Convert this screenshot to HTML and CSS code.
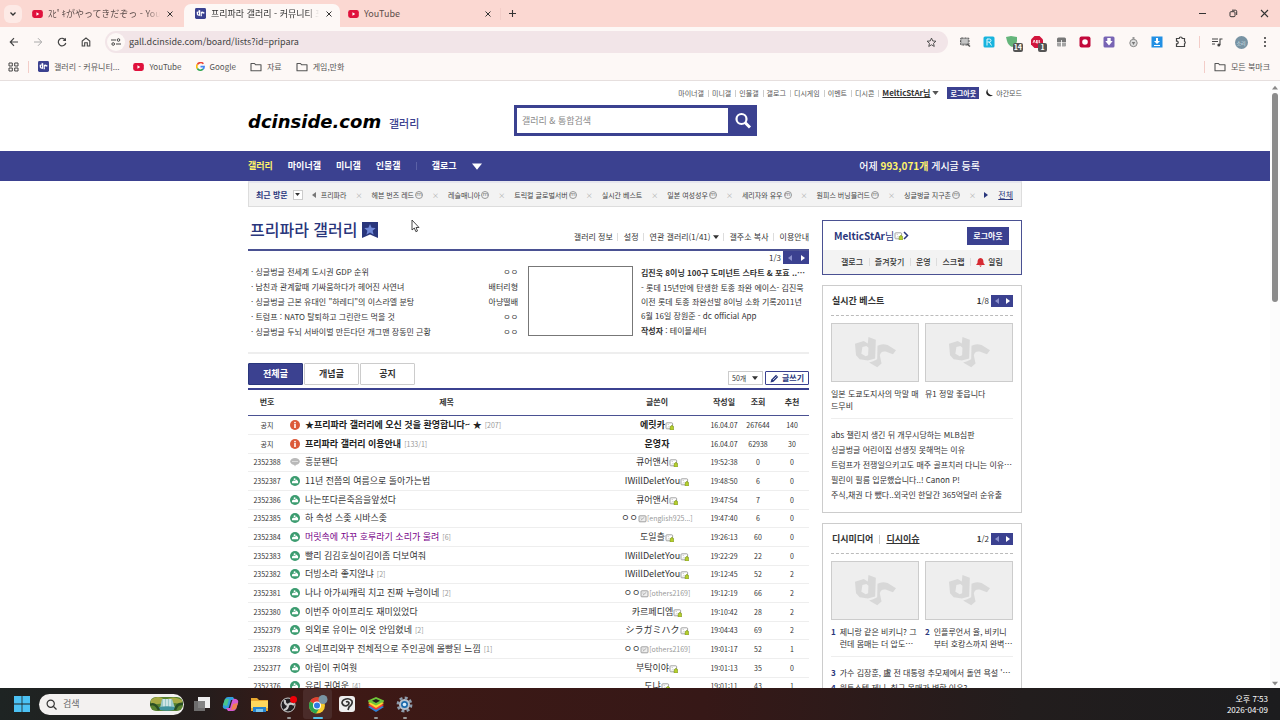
FILE: index.html
```html
<!DOCTYPE html>
<html lang="ko">
<head>
<meta charset="utf-8">
<title>프리파라 갤러리 - 커뮤니티 포털 디시인사이드</title>
<link rel="stylesheet" href="styles.css">
</head>
<body>
<svg class="defs" aria-hidden="true">
  <symbol id="yt" viewBox="0 0 12 9"><rect width="12" height="9" rx="2.4" fill="#e0113c"/><path d="M4.8 2.6v3.8L8 4.5z" fill="#fff"/></symbol>
  <symbol id="dcmark" viewBox="0 0 122 92"><path fill-rule="evenodd" d="M0 20L26 12l12 7L40 0l22 8-2 56-22 6-24-4L3 54zM22 30l-3 20 13 7 7-3 1-22-6-5z"/><path d="M67 26q14-8 30-2l25 15-9 12-22-8q-15-2-17 12l5 24-13 11-24-14 12-4 12-6z"/></symbol>
  <symbol id="fav" viewBox="0 0 12 12"><rect width="12" height="12" rx="1.6" fill="#3b4190"/><path fill-rule="evenodd" d="M1.800 4.200L4 3.800V2l1.800.7v6L3 8.200 2 7.200zM3.300 5v1.800l1 .3V5z" fill="#fff"/><path d="M6.300 4.300q1.400-.9 2.600-.2L10.600 5.200l-.8 1.100-1.700-.7q-.9 0-.8.9l.3 2-1.200 1z" fill="#fff"/></symbol>
  <symbol id="x" viewBox="0 0 8 8"><path d="M1.500 1.500l5 5M6.500 1.500l-5 5" stroke="currentColor" stroke-width="1" fill="none"/></symbol>
  <symbol id="folder" viewBox="0 0 12 10"><path d="M1 1.500h3.500L5.700 2.800H11v6H1z" fill="none" stroke="#555" stroke-width="1.100" stroke-linejoin="round"/></symbol>
  <symbol id="gal" viewBox="0 0 9 8"><rect x="1" y=".8" width="6.600" height="6" rx=".8" fill="#fff" stroke="#8a8a8a" stroke-width=".8"/><path d="M2.500 2.300l1.500.4M2.500 5.300l2-1" stroke="#bbb" stroke-width=".7"/><path d="M5.800 4.600V4q1.200-1.300 2.200 0v.6h.7V8H5.100V4.600z" fill="#b6cf2c" stroke="#6c8420" stroke-width=".5"/></symbol>
  <symbol id="half" viewBox="0 0 9 8"><rect x="1" y=".8" width="7" height="6" rx=".8" fill="#eee" stroke="#8a8a8a" stroke-width=".8"/><path d="M2.800 5.300l3.500-3M2.500 3l1 .2" stroke="#999" stroke-width=".8"/></symbol>
  <symbol id="pic" viewBox="0 0 10 10"><circle cx="5" cy="5" r="5" fill="#3c9c70"/><path d="M2 7.200V5.400l1.800-1 .9.500L6.500 3.400l1.600 1.900v1.900z" fill="#fff"/><circle cx="4.600" cy="3.200" r="1" fill="#fff"/></symbol>
  <symbol id="info" viewBox="0 0 10 10"><circle cx="5" cy="5" r="5" fill="#dc5a3a"/><path d="M4.200 4.100h1.600v4H4.200z" fill="#fff"/><circle cx="5" cy="2.600" r=".9" fill="#fff"/></symbol>
  <symbol id="talk" viewBox="0 0 10 10"><ellipse cx="5" cy="4.500" rx="4.800" ry="3.500" fill="#b9b9b9"/><path d="M4 7.500l1 2 1-2z" fill="#b9b9b9"/><path d="M2.500 4.500h1M4.500 4.500h1M6.500 4.500h1" stroke="#fff"/></symbol>
  <symbol id="left" viewBox="0 0 4 6"><path d="M4 0v6L0 3z" fill="currentColor"/></symbol>
  <symbol id="right" viewBox="0 0 4 6"><path d="M0 0v6l4-3z" fill="currentColor"/></symbol>
  <symbol id="down" viewBox="0 0 8 5"><path d="M0 0h8L4 5z" fill="currentColor"/></symbol>
</svg>

<header class="chrome">
  <div class="tabstrip">
    <button class="tab-menu" aria-label="탭 검색"><svg width="8" height="6" viewBox="0 0 8 6"><path d="M1.500 1.500L4 4l2.500-2.500" fill="none" stroke="#333" stroke-width="1.300"/></svg></button>
    <div class="tab first"><svg width="11" height="8"><use href="#yt"/></svg><span class="tab-title fade">ｽﾋﾟｷがやってきだぞっ - YouTube</span><button aria-label="탭 닫기"><svg width="8" height="8"><use href="#x"/></svg></button></div>
    <div class="tab active"><svg width="11" height="11"><use href="#fav"/></svg><span class="tab-title fade">프리파라 갤러리 - 커뮤니티 포털</span><button aria-label="탭 닫기"><svg width="8" height="8"><use href="#x"/></svg></button></div>
    <div class="tab last"><svg width="11" height="8"><use href="#yt"/></svg><span class="tab-title">YouTube</span><button aria-label="탭 닫기"><svg width="8" height="8"><use href="#x"/></svg></button></div>
    <span class="vbar"></span>
    <button class="newtab" aria-label="새 탭"><svg width="9" height="9" viewBox="0 0 9 9"><path d="M4.500 1v7M1 4.500h7" stroke="#333" stroke-width="1.100"/></svg></button>
    <div class="winctl">
      <button aria-label="최소화"><svg width="9" height="9" viewBox="0 0 9 9"><path d="M1 4.500h7" stroke="#333"/></svg></button>
      <button aria-label="복원"><svg width="9" height="9" viewBox="0 0 9 9"><rect x="1" y="2.700" width="5" height="5" rx="1" fill="none" stroke="#333"/><path d="M3 1.200h3.500q1.200 0 1.200 1.200V6" fill="none" stroke="#333"/></svg></button>
      <button aria-label="닫기"><svg width="9" height="9" viewBox="0 0 9 9"><path d="M1 1l7 7M8 1L1 8" stroke="#333" stroke-width="1.100"/></svg></button>
    </div>
  </div>
  <div class="toolbar">
    <button class="tool" aria-label="뒤로"><svg width="10" height="10" viewBox="0 0 10 10"><path d="M9 5H1.500M5 1.200L1.300 5 5 8.800" fill="none" stroke="#444" stroke-width="1.200"/></svg></button>
    <button class="tool" aria-label="앞으로"><svg width="10" height="10" viewBox="0 0 10 10"><path d="M1 5h7.500M5 1.200L8.700 5 5 8.800" fill="none" stroke="#aaa"/></svg></button>
    <button class="tool" aria-label="새로고침"><svg width="10" height="10" viewBox="0 0 10 10"><path d="M8.300 3A3.800 3.800 0 1 0 8.800 6" fill="none" stroke="#444" stroke-width="1.200"/><path d="M9 .7V4H5.700z" fill="#444"/></svg></button>
    <button class="tool" aria-label="홈"><svg width="10" height="10" viewBox="0 0 10 10"><path d="M1.200 9V4L5 1l3.800 3v5H6.300V5.800H3.700V9z" fill="none" stroke="#444" stroke-width="1.100"/></svg></button>
    <div class="omnibox">
      <span class="site"><svg width="10" height="8" viewBox="0 0 10 8"><path d="M0 2h5M5 6h5" stroke="#444"/><circle cx="7.500" cy="2" r="1.300" fill="none" stroke="#444"/><circle cx="2.200" cy="6" r="1.300" fill="none" stroke="#444"/></svg></span>
      <input aria-label="주소창" value="gall.dcinside.com/board/lists?id=pripara">
      <svg width="11" height="11" viewBox="0 0 12 12"><path d="M6 1.200l1.400 3.100 3.400.3-2.600 2.300.8 3.400L6 8.500l-3 1.800.8-3.400L1.200 4.600l3.400-.3z" fill="none" stroke="#444"/></svg>
    </div>
    <div class="exts">
      <span><svg width="12" height="12" viewBox="0 0 12 12"><rect x="1.500" y="2" width="8.500" height="7" rx="1" fill="#aaa" stroke="#555" stroke-dasharray="2 1"/><path d="M3 4h5.500M3 6h5.500" stroke="#eee" stroke-width=".8"/><path d="M8 8l3 2.500" stroke="#555" stroke-width="1.500"/></svg></span>
      <span><svg width="12" height="12" viewBox="0 0 12 12"><rect x=".5" y=".5" width="11" height="11" rx="1.500" fill="#18b4de"/><path d="M4 9.500V3h2.500q1.500 0 1.500 1.500T6.500 6H4.500M6.300 6L8.500 9.500" fill="none" stroke="#e7faff"/></svg></span>
      <span><svg width="14" height="12" viewBox="0 0 14 12"><path d="M0 1l5-1 6 1v4q-1 5-5 6Q2 9 1 5z" fill="#65b57b"/></svg><b class="cnt">14</b></span>
      <span><svg width="12" height="12" viewBox="0 0 12 12"><path d="M3.500 0h5L12 3.500v5L8.500 12h-5L0 8.500v-5z" fill="#d2143c"/><path d="M2 7l1.200-3L4.300 7M5.500 4v3h1.300V4M8.300 4v3h1" fill="none" stroke="#fff" stroke-width=".8"/></svg><b class="cnt">1</b></span>
      <span><svg width="11" height="12" viewBox="0 0 11 12"><path d="M1 3q0-1.500 1.500-1.500h6Q10 1.500 10 3v3H1z" fill="#777"/><path d="M1 6.500h4v4H2q-1 0-1-1zM6 6.500h4v3q0 1-1 1H6z" fill="#a5a5a5"/><path d="M5.500 4v5" stroke="#fff" stroke-width=".8"/></svg></span>
      <span><svg width="12" height="12" viewBox="0 0 12 12"><rect x=".5" y=".5" width="11" height="11" rx="2" fill="#c2093b"/><circle cx="6" cy="6" r="2.800" fill="#fff"/></svg></span>
      <span><svg width="12" height="12" viewBox="0 0 12 12"><rect x=".5" y=".5" width="11" height="11" rx="1.500" fill="#7864b4"/><path d="M4.300 2h3.400v3h2L6 9.500 2.300 5h2z" fill="#fff"/></svg></span>
      <span><svg width="11" height="12" viewBox="0 0 11 12"><path d="M4.500 1h2v4h-2z" fill="#999"/><circle cx="5.500" cy="7" r="3.700" fill="#ddd" stroke="#888"/><path d="M3.800 6h3.400L5.500 9z" fill="#777"/></svg></span>
      <span><svg width="12" height="12" viewBox="0 0 12 12"><rect x=".5" y=".5" width="11" height="11" fill="#2290e4"/><path d="M5 2h2v3h2L6 8 3 5h2zM3 9h6v1H3z" fill="#fff"/></svg></span>
      <span><svg width="12" height="12" viewBox="0 0 12 12"><path d="M1.500 2.500h2.700a1.500 1.500 0 0 1 3 0h2.300v2.700a1.500 1.500 0 0 1 0 2.600v2.700h-8V7.800h.7a1.400 1.400 0 0 0 0-2.700h-.7z" fill="none" stroke="#444" stroke-width="1.200"/></svg></span>
    </div>
    <span class="vbar"></span>
    <div class="exts">
      <span><svg width="12" height="10" viewBox="0 0 12 10"><path d="M1 2h6M1 4.500h6M1 7h3M9 8V2h2.500" fill="none" stroke="#444" stroke-width="1.100"/><circle cx="7.800" cy="8" r="1.500" fill="#444"/></svg></span>
      <span><i class="avatar">소리</i></span>
      <span><svg width="4" height="12" viewBox="0 0 4 12"><circle cx="2" cy="2" r="1" fill="#333"/><circle cx="2" cy="6" r="1" fill="#333"/><circle cx="2" cy="10" r="1" fill="#333"/></svg></span>
    </div>
  </div>
  <nav class="bookmarks">
    <svg width="11" height="10" viewBox="0 0 11 10"><path d="M1 1h3.300v3H1zM6.700 1H10v3H6.700zM1 6h3.300v3H1zM6.700 6H10v3H6.700z" fill="none" stroke="#444"/></svg>
    <span class="vbar"></span>
    <a href="#"><svg width="11" height="11"><use href="#fav"/></svg>갤러리 - 커뮤니티...</a>
    <a href="#"><svg width="11" height="8"><use href="#yt"/></svg>YouTube</a>
    <a href="#"><svg width="9" height="9" viewBox="0 0 10 10" fill="none" stroke-width="1.800"><path d="M8.200 2A4.100 4.100 0 0 0 1.500 2.800" stroke="#e94335"/><path d="M1.500 2.800a4.100 4.100 0 0 0 0 4.400" stroke="#fbbc05"/><path d="M1.500 7.200A4.100 4.100 0 0 0 7.800 8" stroke="#34a853"/><path d="M7.800 8A4.100 4.100 0 0 0 9 5.200H5" stroke="#4285f4"/></svg>Google</a>
    <a href="#"><svg width="12" height="10"><use href="#folder"/></svg>자료</a>
    <a href="#"><svg width="12" height="10"><use href="#folder"/></svg>게임,만화</a>
    <span class="vbar push"></span>
    <a href="#"><svg width="12" height="10"><use href="#folder"/></svg>모든 북마크</a>
  </nav>
</header>

<div class="viewport">
  <div class="page">
    <div class="wrap">
      <ul class="toplinks">
        <li><a href="#">마이너갤</a></li><li><a href="#">미니갤</a></li><li><a href="#">인물갤</a></li><li><a href="#">갤로그</a></li><li><a href="#">디시게임</a></li><li><a href="#">이벤트</a></li><li><a href="#">디시콘</a></li>
        <li><a href="#" class="me">MelticStAr님</a> <svg width="7" height="4"><use href="#down"/></svg></li>
        <li><button class="logout-s">로그아웃</button></li>
        <li><a href="#"><svg width="8" height="8" viewBox="0 0 8 8"><path d="M3 0a4 4 0 1 0 5 6.200A4.500 4.500 0 0 1 3 0z" fill="#222"/></svg> 야간모드</a></li>
      </ul>
      <div class="masthead">
        <a href="#" class="logo">dcinside.com</a><a href="#" class="logo-sub">갤러리</a>
        <form class="search"><input aria-label="검색" placeholder="갤러리 &amp; 통합검색"><button type="button" aria-label="검색"><svg width="18" height="18" viewBox="0 0 18 18" fill="none" stroke="#fff"><circle cx="7.500" cy="7" r="5" stroke-width="2.200"/><path d="M11 10.500l5 5" stroke-width="3"/></svg></button></form>
      </div>
    </div>
    <nav class="gnb"><div class="wrap">
      <a href="#" class="on">갤러리</a><a href="#">마이너갤</a><a href="#">미니갤</a><a href="#">인물갤</a><span class="gsep"></span><a href="#">갤로그</a><svg width="10" height="7"><use href="#down"/></svg>
      <p>어제 <b>993,071개</b> 게시글 등록</p>
    </div></nav>
    <div class="wrap">
      <div class="recent">
        <strong>최근 방문</strong><button class="drop" aria-label="펼치기"><svg width="5" height="3"><use href="#down"/></svg></button>
        <svg class="prev" width="4" height="6"><use href="#left"/></svg>
        <ul>
          <li><a href="#">프리파라</a></li><li>×</li><li><a href="#">헤븐 번즈 레드<i>m</i></a></li><li>×</li><li><a href="#">레슬매니아<i>m</i></a></li><li>×</li><li><a href="#">트릭컬 글로벌서버<i>m</i></a></li><li>×</li><li><a href="#">실시간 베스트</a></li><li>×</li><li><a href="#">일본 여성성우<i>m</i></a></li><li>×</li><li><a href="#">세리자와 유우<i>m</i></a></li><li>×</li><li><a href="#">원피스 버닝블러드<i>m</i></a></li><li>×</li><li><a href="#">싱글벙글 지구촌<i>m</i></a></li><li>×</li>
        </ul>
        <svg class="next" width="4" height="6"><use href="#right"/></svg>
        <a href="#" class="all">전체</a>
      </div>
      <div class="columns">
        <main>
          <div class="title">
            <h1>프리파라 갤러리</h1>
            <svg width="16" height="16" viewBox="0 0 16 16"><path d="M0 0h16v16l-8-3.500L0 16z" fill="#29367c"/><path d="M8 2l1.600 3.800 4.100.3-3.100 2.700 1 4L8 10.600l-3.600 2.200 1-4-3.100-2.700 4.100-.3z" fill="#7189d8"/></svg>
            <ul><li><a href="#">갤러리 정보</a></li><li><a href="#">설정</a></li><li><a href="#">연관 갤러리(1/41)</a> <svg width="6" height="4"><use href="#down"/></svg></li><li><a href="#">갤주소 복사</a></li><li><a href="#">이용안내</a></li></ul>
          </div>
          <section class="issue">
            <ul>
              <li><a href="#">· 싱글벙글 전세계 도시권 GDP 순위</a><span>ㅇㅇ</span></li>
              <li><a href="#">· 남친과 관계할때 기싸움하다가 헤어진 사연녀</a><span>배터리형</span></li>
              <li><a href="#">· 싱글벙글 근본 유대인 "하레디"의 이스라엘 분탕</a><span>아냥떨배</span></li>
              <li><a href="#">· 트럼프 : NATO 탈퇴하고 그린란드 먹을 것</a><span>ㅇㅇ</span></li>
              <li><a href="#">· 싱글벙글 두뇌 서바이벌 만든다던 개그맨 장동민 근황</a><span>ㅇㅇ</span></li>
            </ul>
            <div class="thumb"></div>
            <div class="feature">
              <div class="pager"><span>1/3</span><button aria-label="이전"><svg width="4" height="6"><use href="#left"/></svg></button><button aria-label="다음"><svg width="4" height="6"><use href="#right"/></svg></button></div>
              <h2>김진욱 8이닝 100구 도미넌트 스타트 &amp; 포효 ..…</h2>
              <p>- 롯데 15년만에 탄생한 토종 좌완 에이스- 김진욱 이전 롯데 토종 좌완선발 8이닝 소화 기록2011년 6월 16일 장원준 - dc official App</p>
              <p class="by"><b>작성자</b> : 테이블세터</p>
            </div>
          </section>
          <div class="listbar">
            <button class="on">전체글</button><button>개념글</button><button>공지</button>
            <span class="sel"><select aria-label="목록 개수"><option>50개</option></select><svg width="6" height="4"><use href="#down"/></svg></span>
            <button class="write"><svg width="9" height="9" viewBox="0 0 9 9"><path d="M.5 8.500l.8-3L6 .8 8.200 3 3.500 7.700z" fill="#29367c"/><path d="M3 6l3.500-3.500" stroke="#fff" stroke-width=".7"/></svg> 글쓰기</button>
          </div>
          <table class="board">
            <thead><tr><th class="no">번호</th><th>제목</th><th class="writer">글쓴이</th><th class="num">작성일</th><th class="num">조회</th><th class="num">추천</th></tr></thead>
            <tbody>
              <tr class="notice"><td>공지</td><td><svg><use href="#info"/></svg><a href="#">★프리파라 갤러리에 오신 것을 환영합니다~ ★</a><em>[207]</em></td><td>에릿카<svg><use href="#gal"/></svg></td><td>16.04.07</td><td>267644</td><td>140</td></tr>
              <tr class="notice"><td>공지</td><td><svg><use href="#info"/></svg><a href="#">프리파라 갤러리 이용안내</a><em>[133/1]</em></td><td>운영자</td><td>16.04.07</td><td>62938</td><td>30</td></tr>
              <tr><td>2352388</td><td><svg><use href="#talk"/></svg><a href="#">흥분됀다</a></td><td>큐어앤서<svg><use href="#gal"/></svg></td><td>19:52:38</td><td>0</td><td>0</td></tr>
              <tr><td>2352387</td><td><svg><use href="#pic"/></svg><a href="#">11년 전쯤의 여름으로 돌아가는법</a></td><td>IWillDeletYou<svg><use href="#gal"/></svg></td><td>19:48:50</td><td>6</td><td>0</td></tr>
              <tr><td>2352386</td><td><svg><use href="#pic"/></svg><a href="#">나는또다른죽음을앞섰다</a></td><td>큐어앤서<svg><use href="#gal"/></svg></td><td>19:47:54</td><td>7</td><td>0</td></tr>
              <tr><td>2352385</td><td><svg><use href="#pic"/></svg><a href="#">하 속성 스좆 시바스좆</a></td><td>ㅇㅇ<svg><use href="#half"/></svg><small>[english925...]</small></td><td>19:47:40</td><td>6</td><td>0</td></tr>
              <tr><td>2352384</td><td><svg><use href="#pic"/></svg><a href="#" class="seen">머릿속에 자꾸 호루라기 소리가 울려</a><em>[6]</em></td><td>도일츨<svg><use href="#gal"/></svg></td><td>19:26:13</td><td>60</td><td>0</td></tr>
              <tr><td>2352383</td><td><svg><use href="#pic"/></svg><a href="#">빨리 김김호실이김이좀 더보여줘</a></td><td>IWillDeletYou<svg><use href="#gal"/></svg></td><td>19:22:29</td><td>22</td><td>0</td></tr>
              <tr><td>2352382</td><td><svg><use href="#pic"/></svg><a href="#">더빙소라 좋지않냐</a><em>[2]</em></td><td>IWillDeletYou<svg><use href="#gal"/></svg></td><td>19:12:45</td><td>52</td><td>2</td></tr>
              <tr><td>2352381</td><td><svg><use href="#pic"/></svg><a href="#">나나 아가씨캐릭 치고 진짜 누렁이네</a><em>[2]</em></td><td>ㅇㅇ<svg><use href="#half"/></svg><small>[others2169]</small></td><td>19:12:19</td><td>66</td><td>2</td></tr>
              <tr><td>2352380</td><td><svg><use href="#pic"/></svg><a href="#">이번주 아이프리도 재미있었다</a></td><td>카르페디엠<svg><use href="#gal"/></svg></td><td>19:10:42</td><td>28</td><td>2</td></tr>
              <tr><td>2352379</td><td><svg><use href="#pic"/></svg><a href="#">의외로 유이는 이옷 안입혔네</a><em>[2]</em></td><td>シラガミハク<svg><use href="#gal"/></svg></td><td>19:04:43</td><td>69</td><td>2</td></tr>
              <tr><td>2352378</td><td><svg><use href="#pic"/></svg><a href="#">오네프리와꾸 전체적으로 주인공에 몰빵된 느낌</a><em>[1]</em></td><td>ㅇㅇ<svg><use href="#half"/></svg><small>[others2169]</small></td><td>19:01:17</td><td>52</td><td>1</td></tr>
              <tr><td>2352377</td><td><svg><use href="#pic"/></svg><a href="#">아림이 귀여웟</a></td><td>부탁이야<svg><use href="#gal"/></svg></td><td>19:01:13</td><td>35</td><td>0</td></tr>
              <tr><td>2352376</td><td><svg><use href="#pic"/></svg><a href="#">유리 귀여운</a><em>[4]</em></td><td>도냐<svg><use href="#gal"/></svg></td><td>19:01:11</td><td>43</td><td>1</td></tr>
            </tbody>
          </table>
        </main>
        <aside>
          <section class="user">
            <div class="who"><a href="#"><b>MelticStAr</b>님<svg width="9" height="8"><use href="#gal"/></svg><svg width="6" height="9" viewBox="0 0 6 9"><path d="M1 1l3.500 3.500L1 8" fill="none" stroke="#29367c" stroke-width="1.500"/></svg></a><button>로그아웃</button></div>
            <ul><li><a href="#">갤로그</a></li><li><a href="#">즐겨찾기</a></li><li><a href="#">운영</a></li><li><a href="#">스크랩</a></li><li><a href="#"><svg width="9" height="9" viewBox="0 0 9 9"><path d="M4.500 0C7 .5 7.500 2 7.500 5L9 7H0l1.500-2C1.500 2 2 .5 4.500 0zM3.200 7.500h2.600L4.500 9z" fill="#d62a32"/></svg> 알림</a></li></ul>
          </section>
          <section class="box">
            <header><h3>실시간 베스트</h3><div class="pager"><span><b>1</b>/8</span><button aria-label="이전"><svg width="4" height="6"><use href="#left"/></svg></button><button aria-label="다음"><svg width="4" height="6"><use href="#right"/></svg></button></div></header>
            <div class="cards">
              <a href="#"><span class="noimg"><svg width="41" height="31"><use href="#dcmark"/></svg></span><span class="cap">일본 도쿄도지사의 막말 매드무비</span></a>
              <a href="#"><span class="noimg"><svg width="41" height="31"><use href="#dcmark"/></svg></span><span class="cap">뮤1 정말 좋읍니다</span></a>
            </div>
            <ul class="lines">
              <li><a href="#">abs 챌린지 생긴 뒤 개무시당하는 MLB심판</a></li>
              <li><a href="#">싱글벙글 어린이집 선생짓 못해먹는 이유</a></li>
              <li><a href="#">트럼프가 전쟁일으키고도 매주 골프치러 다니는 이유…</a></li>
              <li><a href="#">필린이 필름 입문했습니다..! Canon P!</a></li>
              <li><a href="#">주식,채권 다 뺐다..외국인 한달간 365억달러 순유출</a></li>
            </ul>
          </section>
          <section class="box">
            <header><h3>디시미디어</h3><span class="hsep"></span><h3><a href="#">디시이슈</a></h3><div class="pager"><span><b>1</b>/2</span><button aria-label="이전"><svg width="4" height="6"><use href="#left"/></svg></button><button aria-label="다음"><svg width="4" height="6"><use href="#right"/></svg></button></div></header>
            <div class="cards">
              <a href="#"><span class="noimg"><svg width="41" height="31"><use href="#dcmark"/></svg></span><span class="cap rank"><b>1</b><span>제니랑 같은 비키니? 그런데 몸매는 더 압도…</span></span></a>
              <a href="#"><span class="noimg"><svg width="41" height="31"><use href="#dcmark"/></svg></span><span class="cap rank"><b>2</b><span>인플루언서 율, 비키니부터 호캉스까지 완벽…</span></span></a>
            </div>
            <ul class="lines">
              <li><a href="#"><b>3</b>가수 김장훈, 盧 전 대통령 추모제에서 돌연 욕설 '…</a></li>
              <li><a href="#"><b>4</b>원투스텝 제니, 취구 몸매가 변할 이유?</a></li>
            </ul>
          </section>
        </aside>
      </div>
    </div>
  </div>
  <div class="scroll"><svg width="6" height="5" viewBox="0 0 8 5"><path d="M0 5h8L4 0z" fill="#888"/></svg><span></span><svg width="6" height="5"><use href="#down"/></svg></div>
</div>

<footer class="taskbar">
  <button aria-label="시작"><svg width="16" height="16" viewBox="0 0 16 16"><path d="M0 0h7.600v7.600H0zM8.400 0H16v7.600H8.400zM0 8.400h7.600V16H0zM8.400 8.400H16V16H8.400z" fill="#4cc2f4"/></svg></button>
  <label class="tsearch"><svg width="11" height="11" viewBox="0 0 11 11"><circle cx="4.700" cy="4.700" r="3.600" fill="none" stroke="#333" stroke-width="1.200"/><path d="M7.500 7.500l3 3" stroke="#333" stroke-width="1.200"/></svg><input aria-label="검색" placeholder="검색"><svg width="33" height="16" viewBox="0 0 33 16"><rect y="1" width="33" height="14" rx="6" fill="#58822f"/><path d="M1 4q7-6 14 0 8-5 17 0v5q-8-4-15 0-8-3-16 1z" fill="#a7aa45"/><path d="M12 3h10l3 9H10z" fill="#9bc9c9"/><path d="M14 3v8M17 3v9M20 3v8" stroke="#fff"/><ellipse cx="17" cy="12.500" rx="10" ry="2.200" fill="#41949f"/><path d="M0 9q5-3 9 5M33 8q-6-1-8 6" stroke="#294e24" stroke-width="2.500" fill="none"/></svg></label>
  <button aria-label="작업 보기"><svg width="17" height="15" viewBox="0 0 17 15"><path d="M5 0h12v11H5z" fill="#eee"/><path d="M1 4h11v10H1z" fill="#777" opacity=".9"/></svg></button>
  <button aria-label="Copilot"><svg width="17" height="16" viewBox="0 0 17 16"><path d="M6 1h5l2 3H9L7 11q-1 3-4 2-3-1-2-4l2-6q1-2 3-2z" fill="#319ddd"/><path d="M11 15H6l-2-3h4l2-7q1-3 4-2 3 1 2 4l-2 6q-1 2-3 2z" fill="#d55ad0"/><path d="M3 3h4L5 10l-4-1z" fill="#48c58b"/><path d="M11 8l5-1-2 6-5 1z" fill="#ef8151"/></svg></button>
  <button aria-label="파일 탐색기"><svg width="17" height="15" viewBox="0 0 17 15"><path d="M0 1h6l2 2h9v11H0z" fill="#e9a930"/><path d="M0 4h17v7H0z" fill="#ffd75c"/><path d="M2 10h13v5H2z" fill="#2683cd"/><path d="M5 12h7v3H5z" fill="#78c6f0"/></svg></button>
  <button class="run" aria-label="OBS"><svg width="17" height="17" viewBox="0 0 17 17"><circle cx="8" cy="9" r="7" fill="#211f22" stroke="#ccc"/><path d="M8 9Q4 8 5 4M8 9q0 4-4 5M8 9q3-3 6 0" fill="none" stroke="#ccc" stroke-width="2.200"/><circle cx="13.500" cy="3.500" r="3.500" fill="#f00008"/></svg></button>
  <button class="run current" aria-label="Chrome"><svg width="20" height="19" viewBox="0 0 20 19"><circle cx="9" cy="10.500" r="8" fill="#f7cb2c"/><path d="M9 10.500L2 6.500a8 8 0 0 1 14 0z" fill="#e34133"/><path d="M9 10.500L2 6.500A8 8 0 0 0 8 18.400l4-6z" fill="#2ca451"/><circle cx="9" cy="10.500" r="4" fill="#fff"/><circle cx="9" cy="10.500" r="3" fill="#2f7be5"/><circle cx="15" cy="4.500" r="4.500" fill="#7895a4"/></svg></button>
  <button aria-label="Clip Studio"><svg width="16" height="16" viewBox="0 0 16 16"><rect width="16" height="16" rx="3" fill="#eee"/><path d="M9 14l1-3q4-3 3-6-2-3-6-2-4 1-4 4 1 3 4 3 3-1 3-3-1-2-3-1" fill="none" stroke="#333" stroke-width="1.700"/></svg></button>
  <button class="run" aria-label="BlueStacks"><svg width="18" height="17" viewBox="0 0 18 17"><path d="M1 11l8-4 8 4-8 5z" fill="#2d80d8"/><path d="M1 9l8-4 8 4-8 5z" fill="#f04038"/><path d="M1 7l8-4 8 4-8 5z" fill="#ffda32"/><path d="M1 4.500L9 1l8 3.500v1L9 9.500l-8-4z" fill="#70c639"/><path d="M5 4.800L9 3l4 1.800L9 7z" fill="#222"/></svg></button>
  <button class="run" aria-label="설정"><svg width="17" height="17" viewBox="0 0 17 17"><circle cx="8.500" cy="8.500" r="6.700" fill="none" stroke="#8e9cab" stroke-width="2.500" stroke-dasharray="3 2.260"/><circle cx="8.500" cy="8.500" r="5.500" fill="#b5c0cc"/><circle cx="8.500" cy="8.500" r="3.500" fill="#1d6bad"/><circle cx="8.500" cy="8.500" r="1.800" fill="#d7eefc"/></svg></button>
  <div class="clock">오후 7:53<br>2026-04-09</div>
</footer>
<svg class="cursor" width="9" height="14" viewBox="0 0 9 14"><path d="M1 1v10l2.300-2 1.600 3.700 1.600-.7L5 8.500h3z" fill="#fff" stroke="#333" stroke-width=".9"/></svg>
</body>
</html>
```

FILE: styles.css
```css
* { box-sizing: border-box; }
body { margin: 0; height: 100vh; overflow: hidden; display: grid; grid-template-rows: auto minmax(0, 1fr) auto; font: 8px/12px "Noto Sans CJK KR", "Noto Sans", sans-serif; color: #333; background: #fff; }
ul, h1, h2, h3, p { margin: 0; padding: 0; list-style: none; font-size: inherit; }
a { color: inherit; text-decoration: none; }
button, input, select { font: inherit; color: inherit; border: 0; background: none; padding: 0; margin: 0; min-width: 0; outline: 0; }
svg { flex: none; }
.defs { position: absolute; width: 0; height: 0; }
.vbar { width: 1px; height: 12px; background: #f3cdc8; }

/* browser frame */
.chrome { background: #fdf8f6; border-bottom: 1px solid #e6dfde; font-size: 9px; }
.tabstrip { height: 27px; background: #fbd8d2; display: flex; align-items: center; padding-left: 4px; }
.tab-menu { width: 18px; height: 18px; border-radius: 6px; background: #fdeae6; display: grid; place-items: center; }
.tab { display: flex; align-items: center; gap: 5px; height: 23px; margin-top: 4px; padding: 0 6px 4px 11px; }
.tab.first { width: 162px; padding: 0 9px 4px 10px; }
.tab.active { background: #fdf8f6; border-radius: 7px 7px 0 0; width: 156px; }
.tab.last { width: 160px; padding: 0 7px 4px 8px; }
.tab-title { flex: 1; min-width: 0; overflow: hidden; white-space: nowrap; color: #5b4d4b; }
.active .tab-title { color: #333; }
.fade { mask-image: linear-gradient(90deg, #000 88%, transparent); }
.tab button { display: grid; place-items: center; width: 10px; height: 10px; }
.newtab { margin-left: 7px; display: grid; place-items: center; }
.winctl { margin-left: auto; display: flex; }
.winctl button { width: 31px; height: 26px; display: grid; place-items: center; }
.toolbar { height: 30px; display: flex; align-items: center; padding: 0 3px 0 2px; }
.tool { width: 24px; height: 24px; display: grid; place-items: center; }
.omnibox { flex: 1; height: 22px; margin: 0 5px 0 7px; padding: 0 11px 0 2px; display: flex; align-items: center; gap: 4px; background: #f2e5e8; border-radius: 11px; }
.omnibox input { flex: 1; color: #444; }
.site { width: 18px; height: 18px; border-radius: 9px; background: #fdf8f6; display: grid; place-items: center; }
.exts { display: flex; }
.toolbar > .vbar { margin: 0 5px 0 6px; }
.exts span { position: relative; width: 24px; height: 24px; display: grid; place-items: center; }
.cnt { position: absolute; right: 2px; bottom: 2px; min-width: 9px; padding: 0 1px; border-radius: 2px; background: #555; color: #fff; font-size: 7px; line-height: 9px; text-align: center; }
.avatar { width: 13px; height: 13px; border-radius: 7px; background: #7893a3; color: #dfe8ec; font: 5px/13px "Noto Sans CJK KR", sans-serif; text-align: center; }
.bookmarks { height: 23px; padding: 0 10px 4px 8px; display: flex; align-items: center; gap: 9px; color: #555; font-size: 8px; }
.bookmarks a { display: flex; align-items: center; gap: 5px; margin-right: 5px; }
.bookmarks a:last-child { margin-right: 0; }
.bookmarks .push { margin-left: auto; }

/* page */
.viewport { display: flex; min-height: 0; }
.page { flex: 1; min-width: 0; overflow: hidden; }
.scroll { width: 10px; background: #fcfcfc; display: flex; flex-direction: column; align-items: center; padding: 4px 0 2px; color: #888; }
.scroll span { width: 6px; height: 209px; margin: 3px 0 auto; border-radius: 3px; background: #8b8b8b; }
.wrap { max-width: 774px; margin: 0 auto; }
.toplinks { height: 24px; display: flex; justify-content: flex-end; align-items: center; font-size: 7px; color: #555; }
.toplinks li { display: flex; align-items: center; gap: 2px; }
.toplinks li:nth-child(-n+7)::after { content: ""; width: 1px; height: 7px; background: #ccc; margin: 0 3px 0 2px; }
.toplinks li:nth-child(n+9) { margin-left: 8px; }
.toplinks li:last-child { margin-left: 6px; }
.toplinks a { display: flex; align-items: center; gap: 3px; }
.toplinks .me { font-weight: bold; text-decoration: underline; font-size: 8px; color: #333; }
.logout-s { background: #3b4190; color: #fff; font-weight: bold; padding: 0 3px; height: 12px; }
.masthead { height: 46px; display: flex; align-items: flex-start; }
.logo { width: 135px; font: italic bold 18px/34px "DejaVu Sans", sans-serif; color: #000; white-space: nowrap; }
.logo-sub { margin-left: 6px; font-size: 11px; line-height: 36px; color: #3b4190; font-weight: 500; }
.search { margin-left: auto; margin-right: 265px; width: 243px; height: 31px; display: flex; border: 3px solid #3b4190; border-right: 0; background: #3b4190; }
.search input { flex: 1; background: #fff; padding-left: 5px; font-size: 9px; }
.search input::placeholder { color: #888; opacity: 1; }
.search button { width: 29px; display: grid; place-items: center; }
.gnb { background: #3b4190; color: #fff; font-size: 9px; font-weight: bold; }
.gnb .wrap { height: 30px; display: flex; align-items: center; gap: 15px; }
.gnb .on, .gnb b { color: #fff36b; }
.gnb p { margin-left: auto; margin-right: 42px; font-size: 10px; font-weight: 500; }
.gsep { width: 1px; height: 8px; background: #5b61a6; }
.recent { height: 26px; border: 1px solid #ddd; border-top: 2px solid #e6e6ee; background: #f3f3f3; padding: 0 8px 0 7px; display: flex; align-items: center; font-size: 7px; }
.recent strong { color: #29367c; font-size: 8px; white-space: nowrap; }
.drop { width: 10px; height: 10px; margin-left: 5px; background: #fff; border: 1px solid #ccc; display: grid; place-items: center; }
.prev { margin: 0 5px 0 9px; color: #777; }
.recent ul { flex: 1; display: flex; justify-content: space-between; white-space: nowrap; color: #444; }
.recent li:nth-child(even) { color: #aaa; }
.recent i { display: inline-block; width: 8px; height: 8px; margin-left: 1px; border: 1px solid #999; border-radius: 4px; font: 6px/5px "Noto Sans", sans-serif; text-align: center; color: #777; vertical-align: 2px; }
.next { margin: 0 10px 0 8px; color: #29367c; }
.all { color: #29367c; text-decoration: underline; font-size: 8px; }
.columns { display: grid; grid-template-columns: minmax(0, 1fr) 200px; gap: 13px; padding-top: 13px; }

.title { height: 31px; border-bottom: 2px solid #4a5192; display: flex; align-items: center; padding-bottom: 10px; gap: 4px; }
.title h1 { font-size: 16px; line-height: 19px; font-weight: 500; color: #29367c; margin-left: 2px; }
.title ul { margin-left: auto; display: flex; align-self: flex-end; margin-bottom: -4px; }
.title li { display: flex; align-items: center; gap: 2px; white-space: nowrap; }
.title li + li::before { content: ""; width: 1px; height: 8px; background: #ddd; margin: 0 4px; }
.issue { display: grid; grid-template-columns: 272px 105px minmax(0, 1fr); column-gap: 8px; border-bottom: 2px solid #eee; padding-bottom: 13px; }
.issue > ul { padding: 13px 2px 0 3px; line-height: 15px; }
.issue li { display: flex; justify-content: space-between; white-space: nowrap; }
.thumb { margin-top: 15px; height: 70px; border: 1px solid #777; }
.pager { display: flex; align-items: center; justify-content: flex-end; height: 13px; }
.pager span { margin-right: 2px; }
.pager button { width: 13px; height: 13px; display: grid; place-items: center; background: #3b4190; color: #fff; }
.pager button:first-of-type { color: #8a90cc; }
.feature h2 { margin-top: 3px; white-space: nowrap; font-weight: bold; }
.feature p { line-height: 14px; margin-top: 2px; padding-right: 4px; }
.feature .by { margin-top: 1px; }
.listbar { display: flex; align-items: flex-end; margin-top: 9px; padding-bottom: 3px; gap: 1px; }
.listbar > button { width: 55px; height: 22px; border: 1px solid #ccc; border-radius: 1px; font-size: 9px; font-weight: bold; }
.listbar > .on { background: #3b4190; border-color: #29367c; color: #fff; }
.sel { margin-left: auto; margin-right: 1px; width: 35px; height: 14px; border: 1px solid #ccc; display: flex; align-items: center; padding: 0 4px 0 3px; }
.sel select { appearance: none; flex: 1; font-size: 7px; }
.listbar > .write { width: 44px; height: 14px; font-size: 8px; line-height: 10px; border-color: #3b4190; color: #29367c; display: flex; align-items: center; justify-content: center; gap: 3px; }
.board { width: 100%; table-layout: fixed; border-collapse: collapse; border-top: 2px solid #3b4190; }
.board th { height: 26px; padding: 0; border-bottom: 1px solid #4a5192; }
.board .no { width: 38px; }
.board .writer { width: 100px; }
.board .num { width: 34px; }
.board td { height: 19px; padding: 0; text-align: center; line-height: 14px; font-size: 7px; border-bottom: 1px solid #eee; white-space: nowrap; }
.board tr:nth-child(3n) td { height: 18px; }
.board td:nth-child(2) { text-align: left; font-size: 9px; padding-left: 4px; }
.board td:nth-child(3) { font-size: 9px; }
.board td:nth-child(2) svg { width: 10px; height: 10px; margin-right: 5px; vertical-align: -2px; }
.board td:nth-child(3) svg { width: 9px; height: 8px; vertical-align: -2px; }
.board em, .board small { font-style: normal; font-size: 7px; color: #999; }
.board em { margin-left: 3px; }
.notice td:nth-child(2) a, .notice td:nth-child(3) { font-weight: bold; color: #222; }
.seen { color: #770088; }

.user { border: 1px solid #4a5192; margin-bottom: 10px; }
.who { height: 29px; display: flex; align-items: center; justify-content: space-between; padding: 0 12px 0 11px; color: #29367c; font-size: 10px; }
.who a { display: flex; align-items: center; }
.who button { width: 42px; height: 18px; background: #3b4190; color: #fff; font-size: 8px; font-weight: bold; }
.user ul { height: 24px; background: #f3f3f3; display: flex; align-items: center; justify-content: space-between; padding: 0 18px; font-weight: 500; }
.user li { display: flex; align-items: center; }
.user li a { display: flex; align-items: center; gap: 3px; }
.user li + li::before { content: ""; width: 1px; height: 8px; background: #ddd; margin-right: 5px; }
.box { border: 1px solid #ccc; padding: 8px 8px 10px; margin-bottom: 10px; }
.box header { height: 22px; border-bottom: 1px dashed #bbb; display: flex; align-items: flex-start; line-height: 14px; }
.box h3 { font-size: 9px; font-weight: bold; margin-left: 1px; }
.box h3 a { text-decoration: underline; }
.hsep { width: 1px; height: 9px; background: #ccc; margin: 3px 5px 0 6px; }
.box .pager { margin-left: auto; }
.box .pager button { width: 11px; height: 12px; }
.cards { display: grid; grid-template-columns: 1fr 1fr; gap: 6px; padding: 7px 0 6px; border-bottom: 1px solid #eee; }
.noimg { height: 59px; border: 1px solid #ccc; background: #eee; display: grid; place-items: center; fill: #d8d8d8; }
.cap { display: block; margin-top: 6px; }
.rank { display: flex; gap: 4px; }
.rank b, .lines b { color: #29367c; }
.lines b { margin-right: 4px; }
.lines { padding-top: 8px; line-height: 15px; white-space: nowrap; }

/* taskbar */
.taskbar { height: 32px; display: flex; align-items: center; padding: 0 12px; background: linear-gradient(90deg, #1e2423, #251d1c 16%, #3e1915 25%, #361817 55%, #221d1d 80%, #1c1c1e); color: #fff; }
.taskbar button { position: relative; width: 29px; height: 30px; display: grid; place-items: center; }
.taskbar > button:first-child { width: 20px; margin-right: 7px; }
.tsearch { width: 145px; height: 21px; margin-right: 3px; border-radius: 11px; background: #f3f1f0; display: flex; align-items: center; padding: 0 1px 0 7px; gap: 6px; }
.tsearch input { flex: 1; font-size: 9px; }
.tsearch input::placeholder { color: #666; opacity: 1; }
.run::after { content: ""; position: absolute; bottom: 0; left: 13px; width: 4px; height: 2px; border-radius: 1px; background: #999; }
.taskbar .current { background: #4a2b29; border-radius: 3px; }
.current::after { left: 10px; width: 10px; background: #55c1ec; }
.clock { margin-left: auto; text-align: right; line-height: 11px; font-size: 8px; }
.cursor { position: absolute; left: 411px; top: 219px; }
```
